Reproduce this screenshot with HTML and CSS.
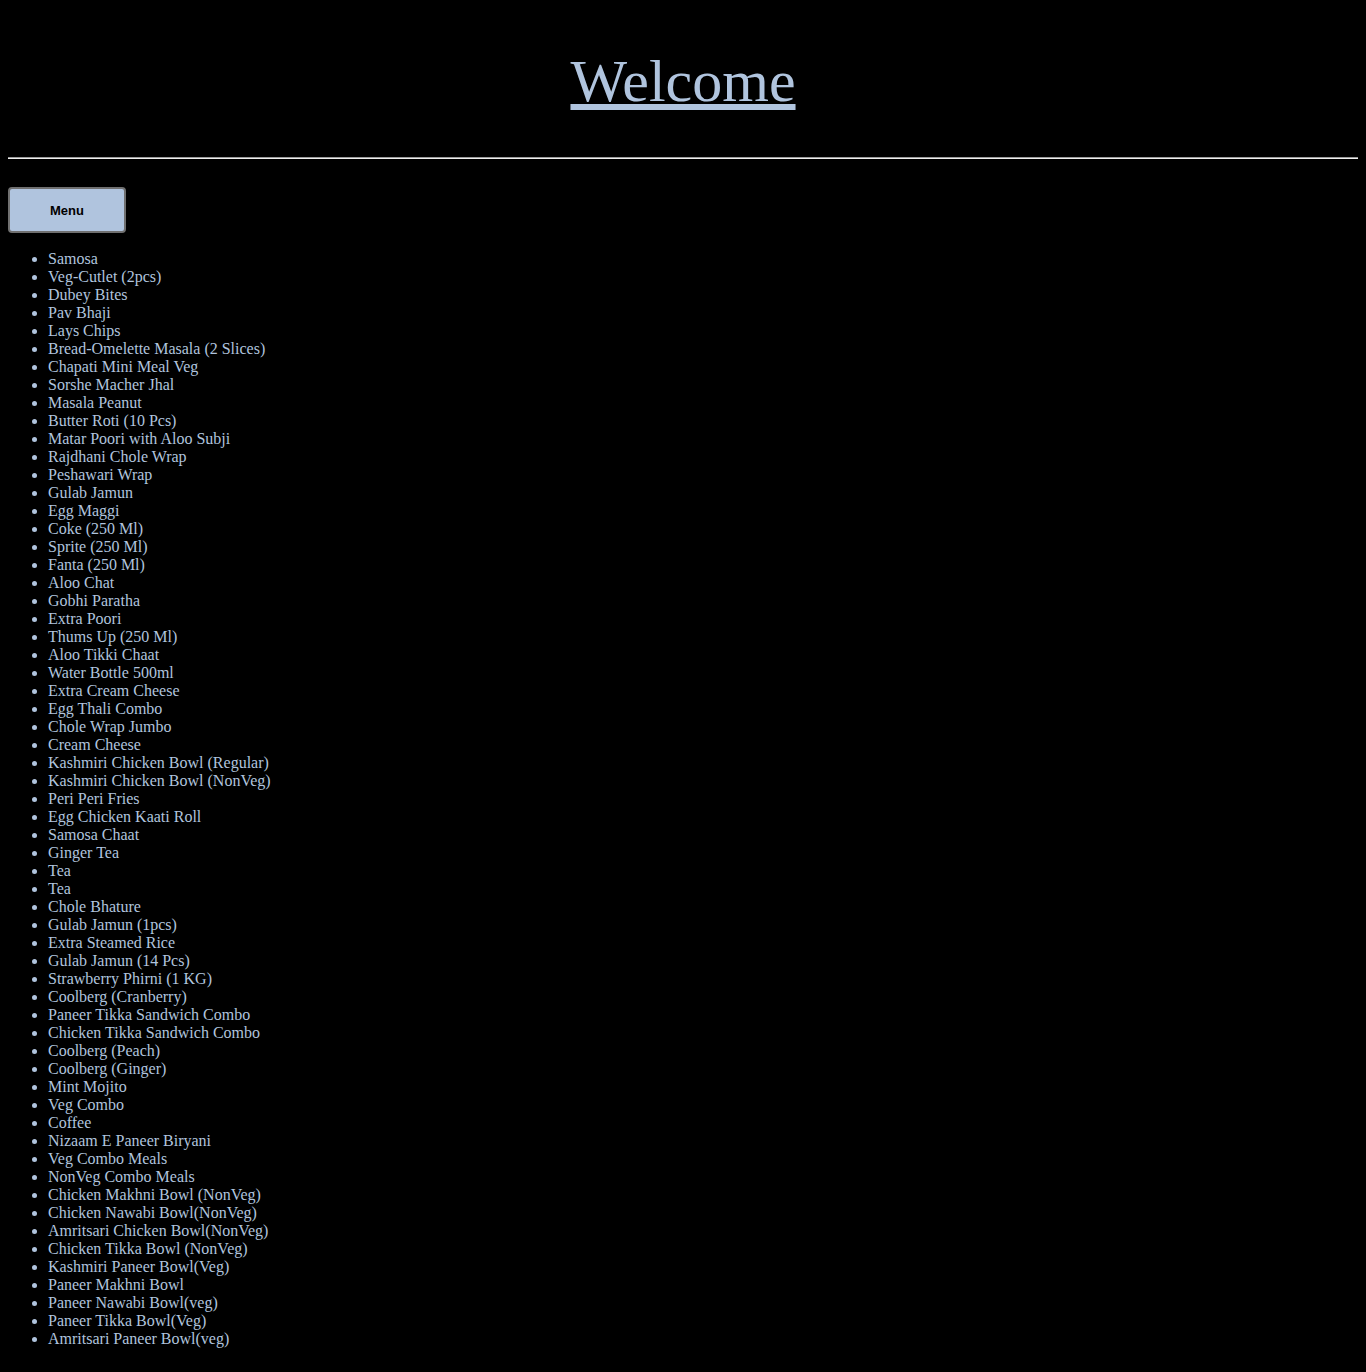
FILE: index.html
```html
<!DOCTYPE html>
<html>
<head>
<meta charset="utf-8">
<link rel="stylesheet" href="styles.css">
</head>
<body>
<h1 class="title">Welcome</h1>
<hr class="rule">
<div class="actions"><button class="menu-btn">Menu</button></div>
<ul class="items">
<li>Samosa</li>
<li>Veg-Cutlet (2pcs)</li>
<li>Dubey Bites</li>
<li>Pav Bhaji</li>
<li>Lays Chips</li>
<li>Bread-Omelette Masala (2 Slices)</li>
<li>Chapati Mini Meal Veg</li>
<li>Sorshe Macher Jhal</li>
<li>Masala Peanut</li>
<li>Butter Roti (10 Pcs)</li>
<li>Matar Poori with Aloo Subji</li>
<li>Rajdhani Chole Wrap</li>
<li>Peshawari Wrap</li>
<li>Gulab Jamun</li>
<li>Egg Maggi</li>
<li>Coke (250 Ml)</li>
<li>Sprite (250 Ml)</li>
<li>Fanta (250 Ml)</li>
<li>Aloo Chat</li>
<li>Gobhi Paratha</li>
<li>Extra Poori</li>
<li>Thums Up (250 Ml)</li>
<li>Aloo Tikki Chaat</li>
<li>Water Bottle 500ml</li>
<li>Extra Cream Cheese</li>
<li>Egg Thali Combo</li>
<li>Chole Wrap Jumbo</li>
<li>Cream Cheese</li>
<li>Kashmiri Chicken Bowl (Regular)</li>
<li>Kashmiri Chicken Bowl (NonVeg)</li>
<li>Peri Peri Fries</li>
<li>Egg Chicken Kaati Roll</li>
<li>Samosa Chaat</li>
<li>Ginger Tea</li>
<li>Tea</li>
<li>Tea</li>
<li>Chole Bhature</li>
<li>Gulab Jamun (1pcs)</li>
<li>Extra Steamed Rice</li>
<li>Gulab Jamun (14 Pcs)</li>
<li>Strawberry Phirni (1 KG)</li>
<li>Coolberg (Cranberry)</li>
<li>Paneer Tikka Sandwich Combo</li>
<li>Chicken Tikka Sandwich Combo</li>
<li>Coolberg (Peach)</li>
<li>Coolberg (Ginger)</li>
<li>Mint Mojito</li>
<li>Veg Combo</li>
<li>Coffee</li>
<li>Nizaam E Paneer Biryani</li>
<li>Veg Combo Meals</li>
<li>NonVeg Combo Meals</li>
<li>Chicken Makhni Bowl (NonVeg)</li>
<li>Chicken Nawabi Bowl(NonVeg)</li>
<li>Amritsari Chicken Bowl(NonVeg)</li>
<li>Chicken Tikka Bowl (NonVeg)</li>
<li>Kashmiri Paneer Bowl(Veg)</li>
<li>Paneer Makhni Bowl</li>
<li>Paneer Nawabi Bowl(veg)</li>
<li>Paneer Tikka Bowl(Veg)</li>
<li>Amritsari Paneer Bowl(veg)</li>
</ul>
</body>
</html>
```

FILE: styles.css
```css
html {
  background: #000;
}
body {
  margin: 0;
  padding: 8px;
  background: #000;
  color: #b0c4de;
  font-family: "Liberation Serif", "Times New Roman", serif;
  font-size: 16px;
}
.title {
  margin: 39px 0 41px;
  text-align: center;
  font-size: 60px;
  font-weight: normal;
  line-height: 69px;
  text-decoration: underline;
  color: #b0c4de;
}
.rule {
  margin: 0 0 8px;
  border: 0;
  border-top: 1px solid #9a9a9a;
  border-bottom: 1px solid #eeeeee;
  height: 0;
}
.actions {
  padding-top: 20px;
}
.menu-btn {
  display: block;
  width: 118px;
  height: 46px;
  margin: 0;
  background: #b0c4de;
  border: 2px solid #707070;
  border-radius: 4px;
  font-family: "Liberation Sans", Arial, sans-serif;
  font-size: 13px;
  font-weight: bold;
  color: #000;
}
.items {
  margin: 17px 0 0;
  padding-left: 40px;
}
.items li {
  line-height: 18px;
}
```
